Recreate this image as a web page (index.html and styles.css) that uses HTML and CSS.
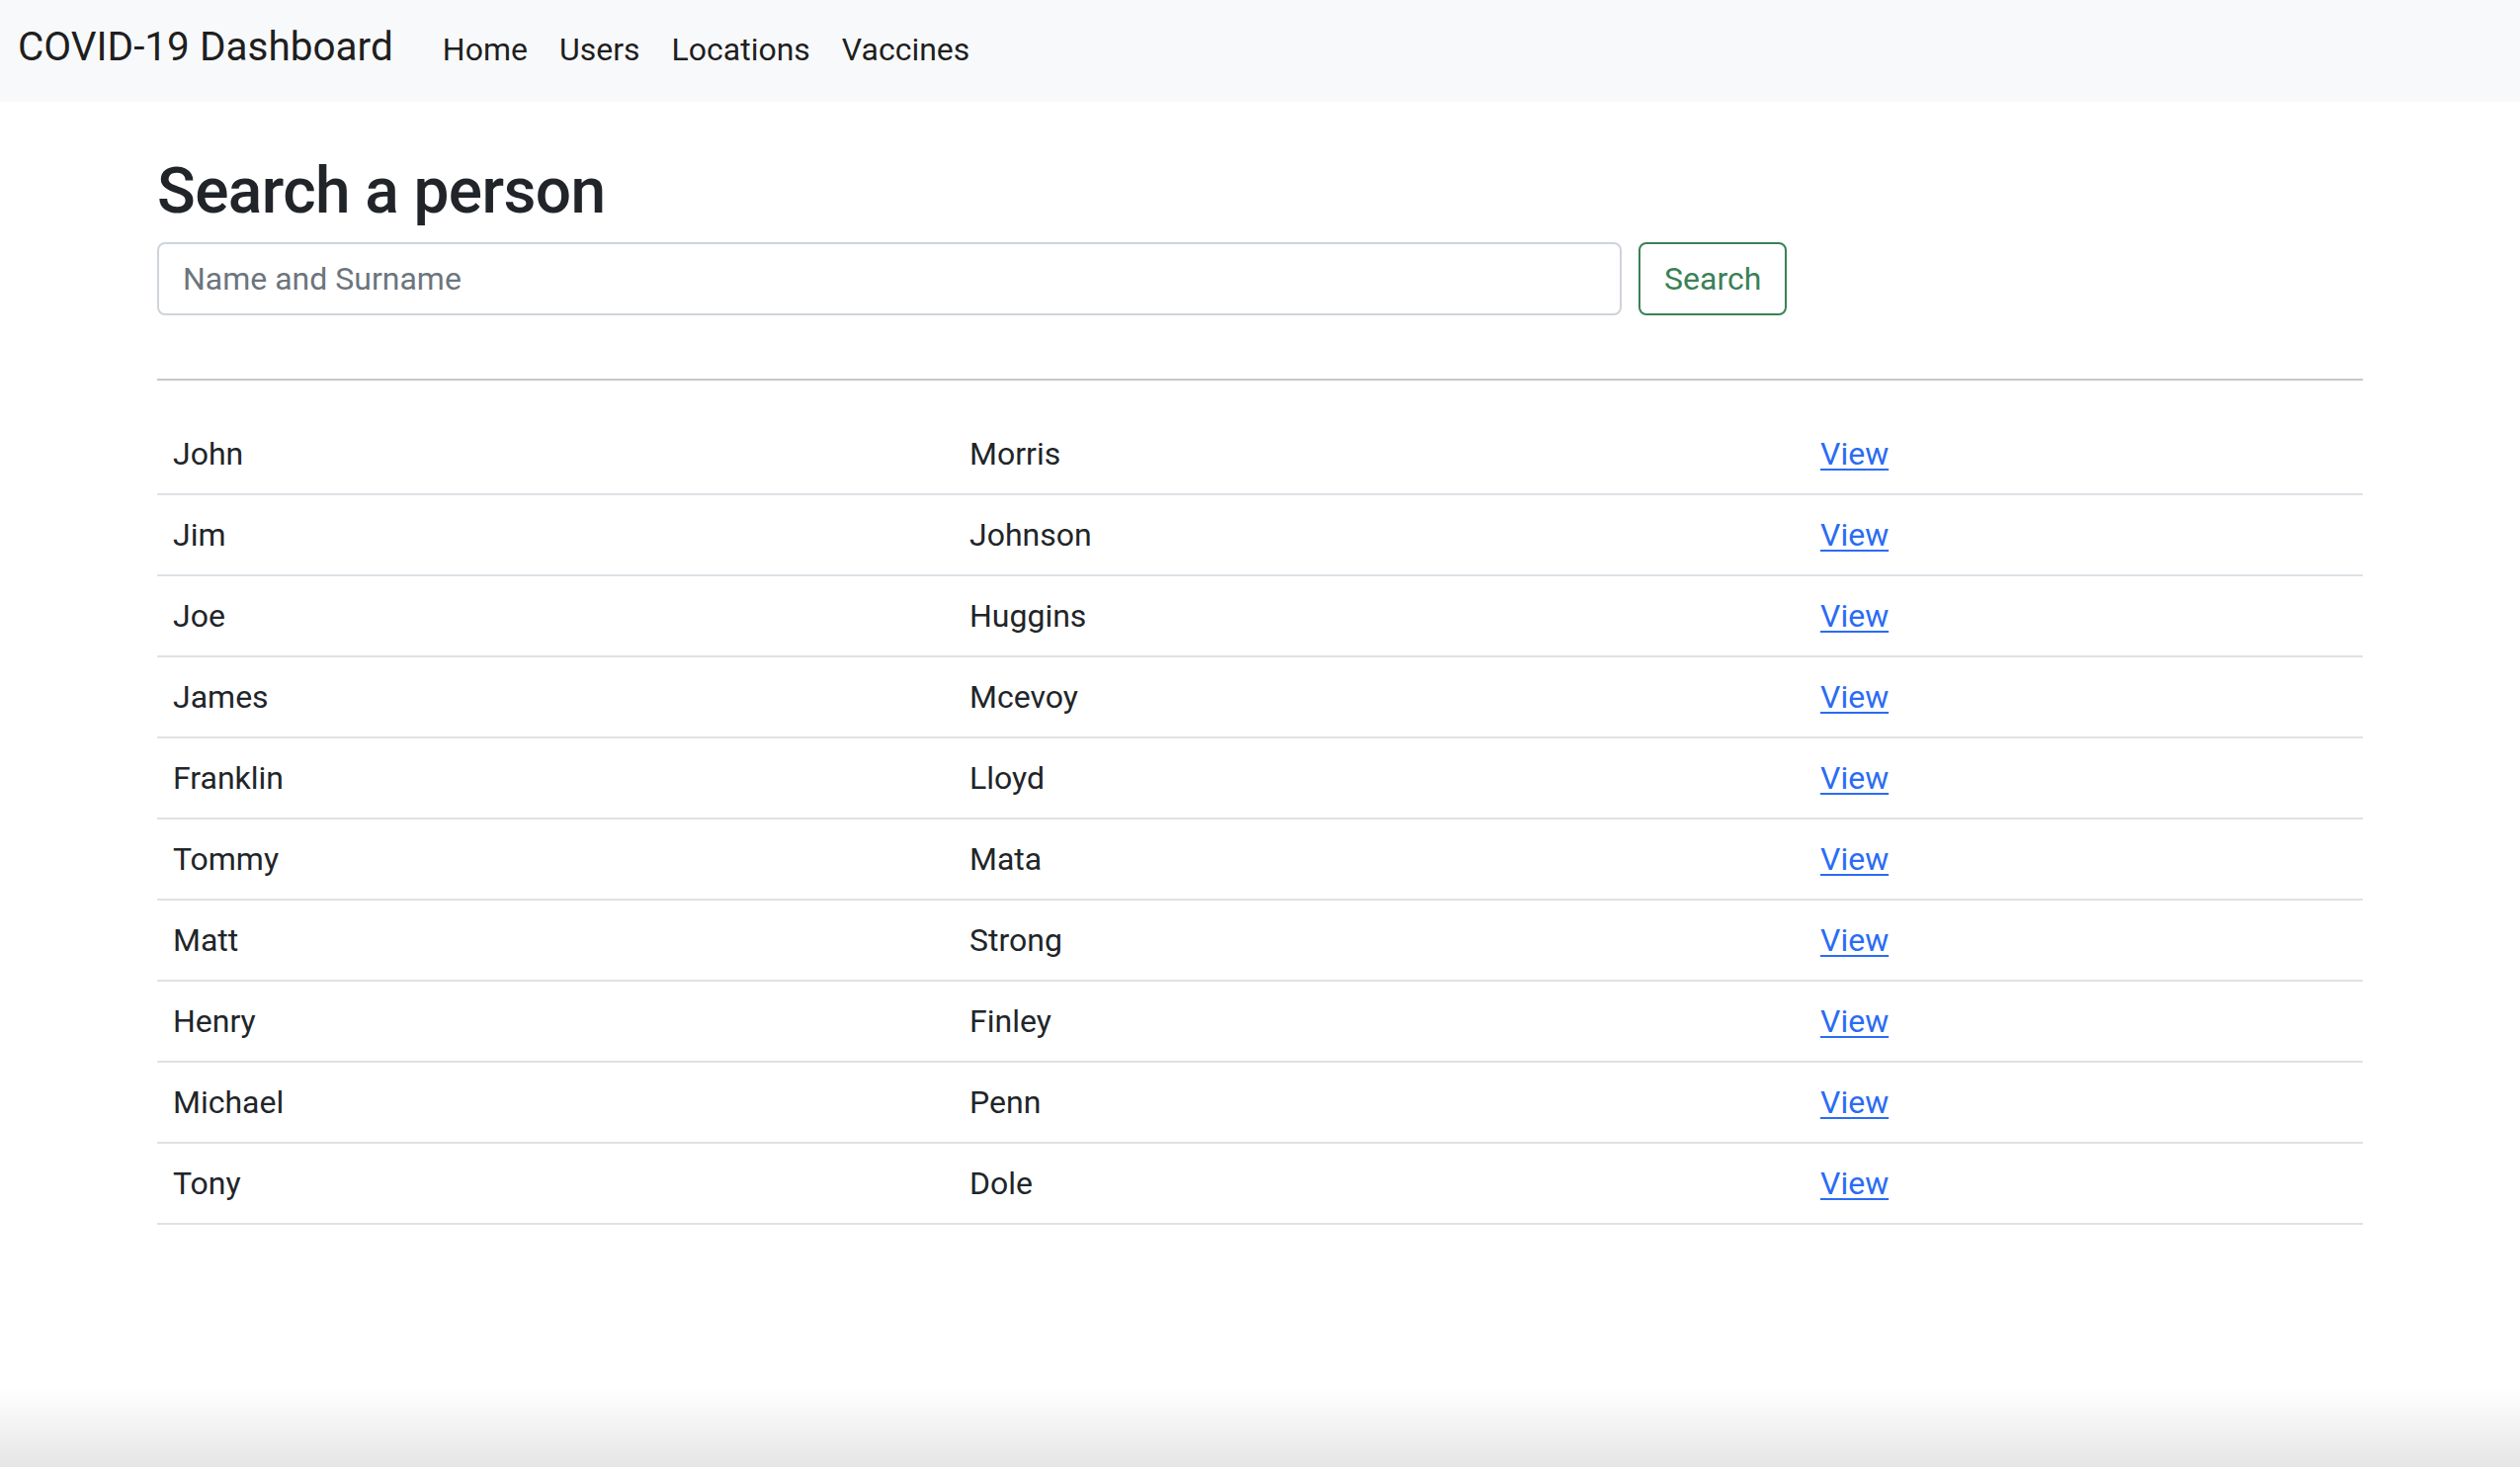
FILE: index.html
```html
<!DOCTYPE html>
<html lang="en">
<head>
<meta charset="utf-8">
<title>COVID-19 Dashboard</title>
<link rel="stylesheet" href="styles.css">
</head>
<body>
<nav class="navbar">
  <a class="brand" href="#">COVID-19 Dashboard</a>
  <ul class="nav-links">
    <li><a class="nav-link" href="#">Home</a></li>
    <li><a class="nav-link" href="#">Users</a></li>
    <li><a class="nav-link" href="#">Locations</a></li>
    <li><a class="nav-link" href="#">Vaccines</a></li>
  </ul>
</nav>
<main class="container">
  <h2 class="title">Search a person</h2>
  <form class="search-form">
    <input class="search-input" type="text" placeholder="Name and Surname">
    <button class="search-btn" type="button">Search</button>
  </form>
  <hr class="divider">
  <table class="people">
    <colgroup>
      <col class="col-first">
      <col class="col-last">
      <col class="col-action">
    </colgroup>
    <tbody>
      <tr><td>John</td><td>Morris</td><td><a href="#">View</a></td></tr>
      <tr><td>Jim</td><td>Johnson</td><td><a href="#">View</a></td></tr>
      <tr><td>Joe</td><td>Huggins</td><td><a href="#">View</a></td></tr>
      <tr><td>James</td><td>Mcevoy</td><td><a href="#">View</a></td></tr>
      <tr><td>Franklin</td><td>Lloyd</td><td><a href="#">View</a></td></tr>
      <tr><td>Tommy</td><td>Mata</td><td><a href="#">View</a></td></tr>
      <tr><td>Matt</td><td>Strong</td><td><a href="#">View</a></td></tr>
      <tr><td>Henry</td><td>Finley</td><td><a href="#">View</a></td></tr>
      <tr><td>Michael</td><td>Penn</td><td><a href="#">View</a></td></tr>
      <tr><td>Tony</td><td>Dole</td><td><a href="#">View</a></td></tr>
    </tbody>
  </table>
</main>
<div class="bottom-shade"></div>
</body>
</html>
```

FILE: styles.css
```css
* { box-sizing: border-box; }

html, body {
  margin: 0;
  padding: 0;
  background: #fff;
}

body {
  font-family: Roboto, "Liberation Sans", Arial, sans-serif;
  font-size: 32px;
  line-height: 1.5;
  color: #212529;
  min-height: 1484px;
}

.navbar {
  display: flex;
  align-items: baseline;
  height: 103px;
  padding: 17px 18px 0;
  background: #f8f9fa;
}

.brand {
  font-size: 40.5px;
  line-height: 60px;
  color: rgba(0, 0, 0, 0.9);
  text-decoration: none;
  margin-right: 34px;
}

.nav-links {
  display: flex;
  list-style: none;
  margin: 0;
  padding: 0;
}

.nav-link {
  display: block;
  padding: 0 16px;
  font-size: 32px;
  line-height: 48px;
  color: rgba(0, 0, 0, 0.9);
  text-decoration: none;
}

.container {
  width: 2232px;
  margin: 0 auto;
  padding-top: 53px;
}

.title {
  margin: 0 0 12px;
  font-size: 64px;
  font-weight: 500;
  line-height: 1.2;
  letter-spacing: -0.6px;
  color: #212529;
}

.search-form {
  display: flex;
  gap: 17px;
  align-items: stretch;
}

.search-input {
  width: 1482px;
  height: 74px;
  padding: 0 24px;
  font-family: inherit;
  font-size: 32px;
  color: #212529;
  background: #fff;
  border: 2px solid #ced4da;
  border-radius: 8px;
  outline: none;
}

.search-input::placeholder {
  color: #6c757d;
}

.search-btn {
  height: 74px;
  padding: 0 24px;
  font-family: inherit;
  font-size: 32px;
  color: #3a8156;
  background: #fff;
  border: 2px solid #3a8156;
  border-radius: 8px;
}

.divider {
  margin: 64px 0 34px;
  border: 0;
  border-top: 2px solid #c6c7c8;
}

.people {
  width: 100%;
  border-collapse: collapse;
  table-layout: fixed;
}

.col-first { width: 806px; }
.col-last { width: 861px; }

.people td {
  padding: 16px;
  line-height: 48px;
  border-bottom: 2px solid #dee2e6;
  vertical-align: top;
}

.people a {
  color: #2a6cf4;
  text-decoration: underline;
  text-underline-offset: 4px;
  text-decoration-thickness: 2px;
}

.bottom-shade {
  position: fixed;
  left: 0;
  right: 0;
  bottom: 0;
  height: 80px;
  background: linear-gradient(to bottom, rgba(0, 0, 0, 0), rgba(0, 0, 0, 0.1));
  pointer-events: none;
}
```
